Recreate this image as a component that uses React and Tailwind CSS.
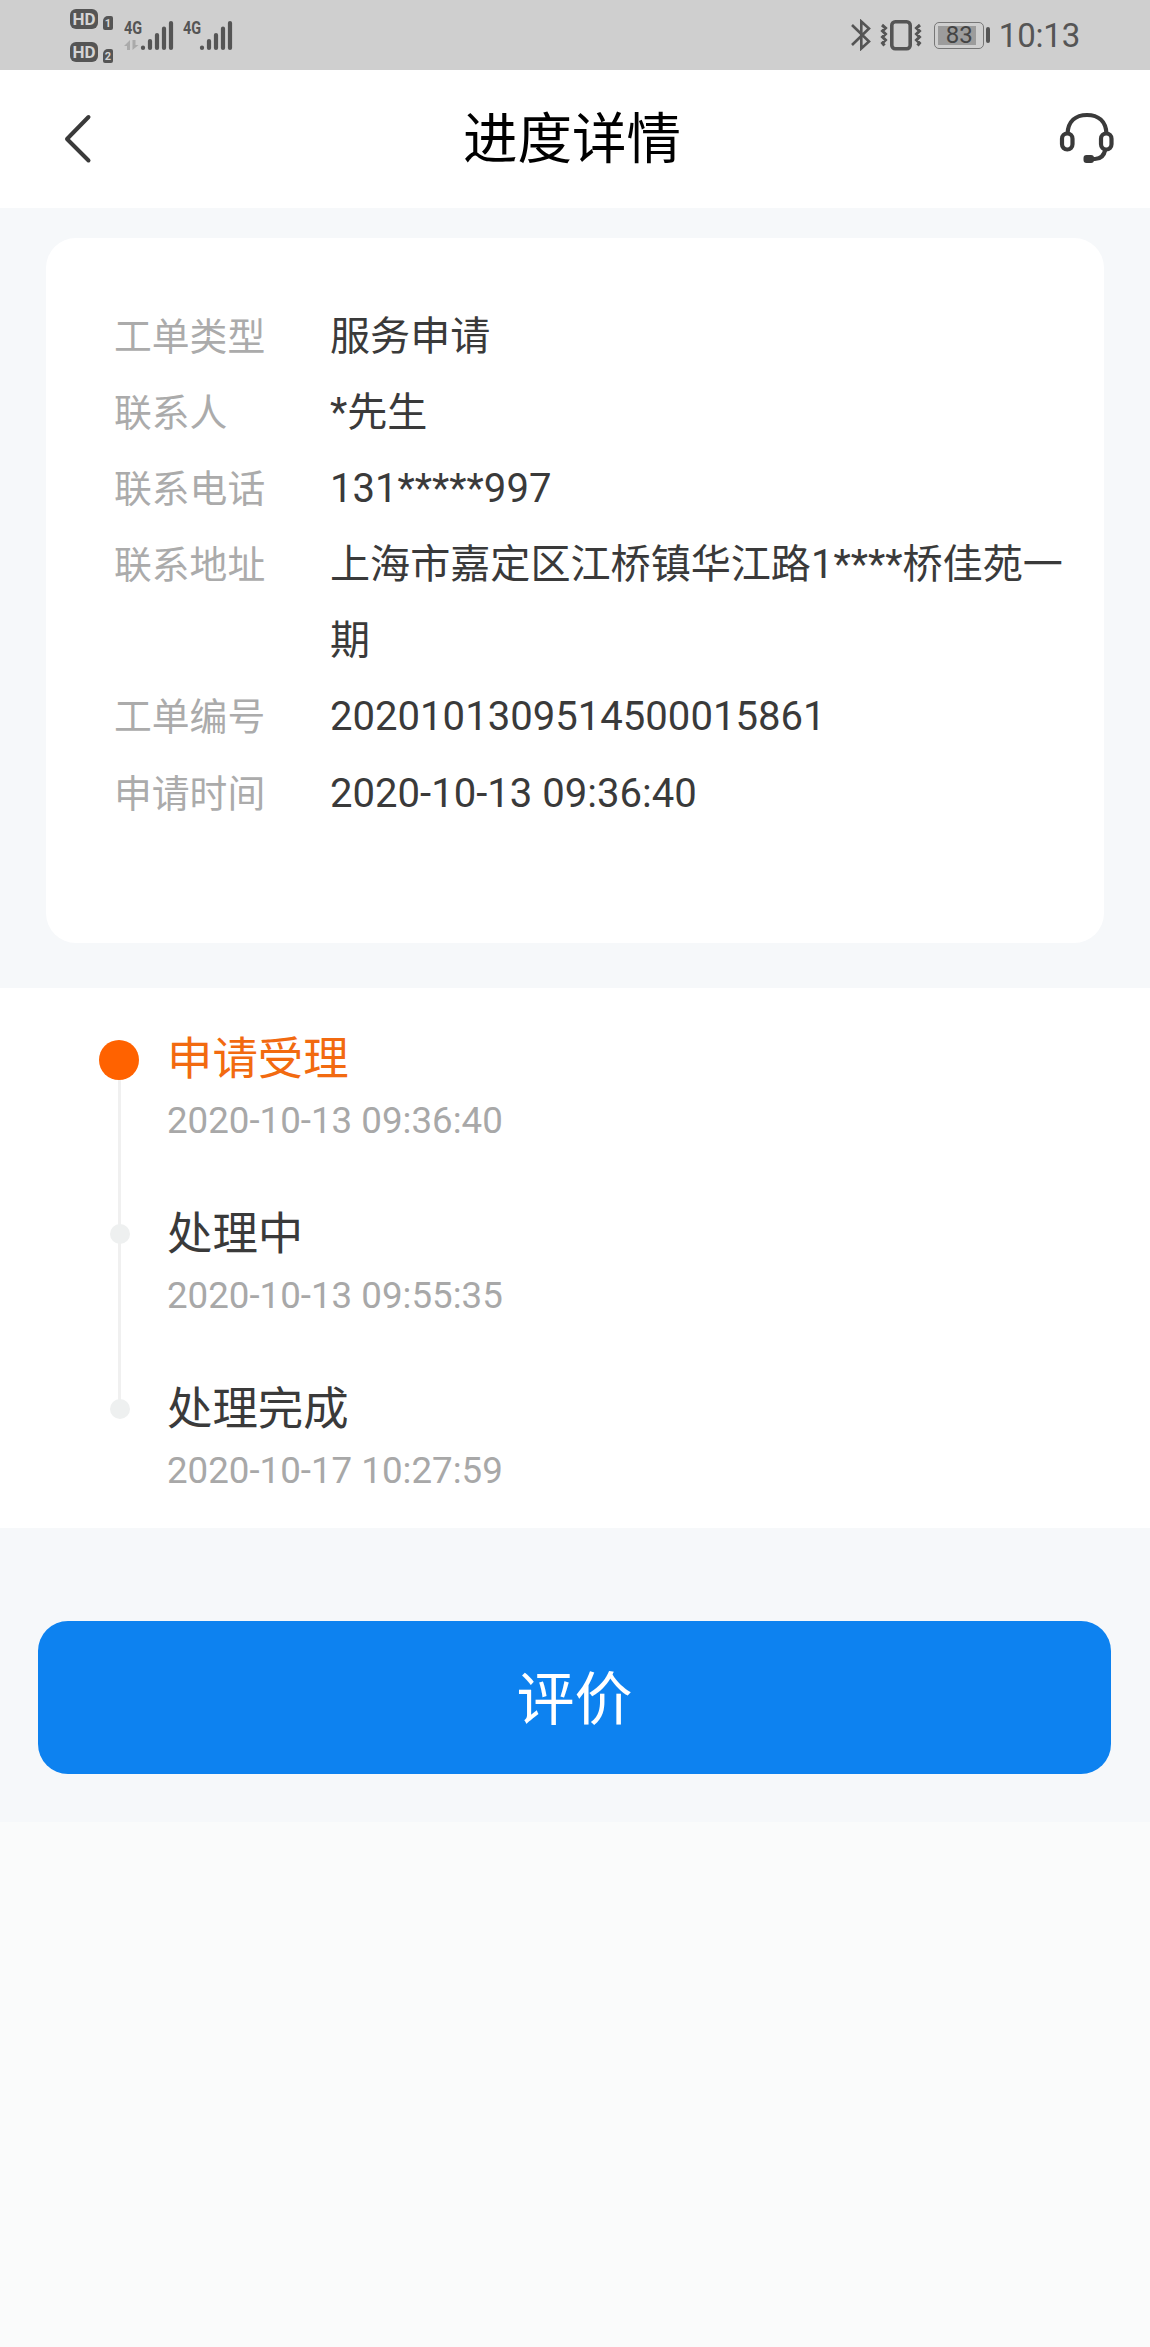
import clsx from 'clsx';

const details = [
  { label: '工单类型', value: '服务申请' },
  { label: '联系人', value: '*先生' },
  { label: '联系电话', value: '131*****997' },
  { label: '联系地址', value: '上海市嘉定区江桥镇华江路1****桥佳苑一期' },
  { label: '工单编号', value: '2020101309514500015861' },
  { label: '申请时间', value: '2020-10-13 09:36:40' }
];

const steps = [
  { title: '申请受理', time: '2020-10-13 09:36:40', active: true },
  { title: '处理中', time: '2020-10-13 09:55:35' },
  { title: '处理完成', time: '2020-10-17 10:27:59' }
];

function SimBadge({ slot }) {
  return (
    <div className="flex items-end gap-[5px]">
      <span className="flex h-5 w-7 items-center justify-center rounded-[6px] bg-[#555] font-['Roboto'] text-[17px] leading-none font-bold text-[#d4d4d4]">
        HD
      </span>
      <span className="mb-[-1px] flex h-[14px] w-[10px] items-center justify-center rounded-[2px] rounded-tl-[5px] bg-[#555] text-[11px] leading-none font-bold text-[#d4d4d4]">
        {slot}
      </span>
    </div>
  );
}

function Signal({ data }) {
  return (
    <div className="relative h-8 w-[50px]">
      <span className="absolute top-0 left-0 origin-left scale-x-[0.76] text-[19px] leading-[17px] font-bold text-[#555]">4G</span>
      <svg viewBox="0 0 50 32" className="h-8 w-[50px]" fill="none">
        {data ? (
          <path d="M0 27 L6 21 V31 H3 V27 Z M8.5 21 V31 L14.5 26 H11.5 V21 Z" fill="#aaa" />
        ) : null}
        <path
          d="M19 28.6V29 M26 22V29 M33 16V29 M40 9.5V29 M47 4V29"
          stroke="#555"
          strokeWidth="4.2"
          strokeLinecap="round"
        />
      </svg>
    </div>
  );
}

function StatusBar() {
  return (
    <div className="flex h-[70px] justify-between bg-[#cfcfcf] pr-[70px] pl-[70px] font-['Roboto']">
      <div className="flex">
        <div className="flex flex-col gap-[13px] pt-[9px]">
          <SimBadge slot="1" />
          <SimBadge slot="2" />
        </div>
        <div className="flex gap-[9px] pt-[19px] pl-[11px]">
          <Signal data />
          <Signal />
        </div>
      </div>
      <div className="flex items-center text-[#555]">
        <svg viewBox="0 0 20 32" className="h-8 w-5" fill="none" stroke="currentColor" strokeWidth="2.6">
          <path d="M1 6 L18 22.5 L10.3 29.5 V2.5 L18 9.5 L1 26" />
        </svg>
        <svg viewBox="0 0 42 32" className="ml-[9px] h-8 w-[42px]" fill="none" stroke="currentColor">
          <rect x="11.8" y="2.8" width="18.4" height="27" rx="3.5" strokeWidth="3.6" />
          <path
            d="M2 6 L5.5 9 L2.5 12 L5.5 15 L2.5 18 L5.5 21 L2.5 24 L4.5 26.5 M40 6 L36.5 9 L39.5 12 L36.5 15 L39.5 18 L36.5 21 L39.5 24 L37.5 26.5"
            strokeWidth="3"
          />
        </svg>
        <div className="ml-3 flex h-[27px] w-[50px] items-center rounded-[5px] border-[1.5px] border-[#777] px-[3px]">
          <span className="flex h-[19px] w-[38px] items-center justify-end bg-[#9c9c9c] pr-[3px] text-[24px] leading-none text-[#444]">
            83
          </span>
        </div>
        <span className="ml-[2px] h-4 w-1 rounded-[2px] bg-[#555]" />
        <span className="ml-[9px] text-[33px] leading-none tracking-[-0.2px]">10:13</span>
      </div>
    </div>
  );
}

function Header() {
  return (
    <header className="flex h-[138px] items-center bg-white pr-[35px] pl-[63px]">
      <svg viewBox="0 0 52 50" className="mt-[-1px] h-[50px] w-[52px]" fill="none">
        <path d="M25.5 3 L4 25 L25.5 46.5" stroke="#3a3a3a" strokeWidth="4" strokeLinecap="round" strokeLinejoin="round" />
      </svg>
      <h1 className="flex-1 pr-[2px] pl-[2px] text-center text-[54.5px] leading-none text-black">
        <span className="mr-[30px]">进度详情</span>
      </h1>
      <svg viewBox="0 0 56 54" className="mt-[-3px] h-[54px] w-14" fill="none" stroke="#3a3a3a" strokeWidth="4.2">
        <path d="M8.5 23 C9 10 17 4 28 4 C39 4 47 10 47.5 23" />
        <rect x="3" y="22.5" width="10.5" height="16" rx="5.2" />
        <rect x="42" y="22.5" width="10.5" height="16" rx="5.2" />
        <path d="M46.5 38 C45 45 41 48 36 48 H30" />
        <rect x="25.5" y="45" width="8.5" height="6" rx="2" fill="#3a3a3a" strokeWidth="2" />
      </svg>
    </header>
  );
}

function DetailCard() {
  return (
    <dl className="mx-[46px] h-[705px] rounded-[30px] bg-white pt-[61px] pr-[34px] pl-[68px]">
      {details.map((item) => (
        <div key={item.label} className="flex leading-[76.1px]">
          <dt className="w-[216px] shrink-0 text-[37.8px] text-[#ababab]">{item.label}</dt>
          <dd className="text-[40.1px] break-all text-[#3a3a3a]">{item.value}</dd>
        </div>
      ))}
    </dl>
  );
}

function Timeline() {
  return (
    <ol className="h-[540px] bg-white pt-[41px] pl-[99px]">
      {steps.map((step, index) => (
        <li key={step.title} className="flex h-[175px]">
          <div className="relative flex w-10 shrink-0 justify-center">
            {index < steps.length - 1 ? (
              <span className="absolute top-[31px] left-[19px] h-[175px] w-[3px] bg-[#f0f0f0]" />
            ) : null}
            <span
              className={clsx(
                'relative rounded-full',
                step.active ? 'mt-[11px] size-10 bg-[#ff6200]' : 'mt-[20px] ml-[1px] size-5 bg-[#eef0f0]'
              )}
            />
          </div>
          <div className="pt-px pl-[28px]">
            <p className={clsx('text-[45.4px] leading-[60px]', step.active ? 'text-[#f26a10]' : 'text-[#3a3a3a]')}>
              {step.title}
            </p>
            <p className="text-[36.7px] leading-[61px] text-[#a8a8a8]">{step.time}</p>
          </div>
        </li>
      ))}
    </ol>
  );
}

export default function App() {
  return (
    <div className="min-h-[2347px] bg-[#fafbfb] font-['Roboto','Noto_Sans_CJK_SC',sans-serif]">
      <StatusBar />
      <Header />
      <main className="h-[1614px] bg-[#f6f8fa] pt-[30px]">
        <DetailCard />
        <div className="pt-[45px]">
          <Timeline />
        </div>
        <button className="mx-[38px] mt-[93px] h-[153px] w-[1073px] rounded-[30px] bg-[#0d82f0] pt-[5px] text-[58px] text-white">
          评价
        </button>
      </main>
    </div>
  );
}
